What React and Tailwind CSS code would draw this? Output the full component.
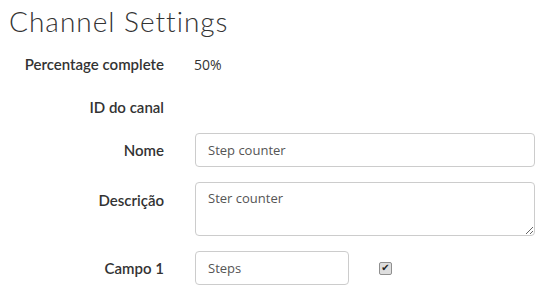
import React from 'react';

const labelCls = "w-[164px] shrink-0 text-right text-[15px] font-semibold text-[#333] font-['Lato',sans-serif]";
const inputCls = "h-[34px] rounded border border-[#ccc] bg-white px-3 text-[13px] text-[#555] outline-none";

const Row = ({ label, children, className = '' }) => (
  <div className={`flex items-center ${className}`}>
    <div className={labelCls}>{label}</div>
    <div className="ml-[31px] flex items-center">{children}</div>
  </div>
);

export default function App() {
  return (
    <div className="w-[542px] h-[295px] overflow-hidden bg-white font-['Open_Sans',sans-serif] text-[#333]">
      <h1 className="pl-[9px] pt-[2px] text-[28px] font-light leading-[38px] tracking-[1px] font-['Lato',sans-serif]">
        Channel Settings
      </h1>

      <Row label="Percentage complete" className="mt-[7px] h-[34px]">
        <span className="-ml-px text-[14px]">50%</span>
      </Row>

      <Row label="ID do canal" className="mt-[9px] h-[34px]" />

      <Row label="Nome" className="mt-[9px]">
        <input className={`${inputCls} w-[340px]`} defaultValue="Step counter" />
      </Row>

      <div className="mt-[15px] flex items-start">
        <div className={`${labelCls} pt-[7px]`}>Descrição</div>
        <textarea
          className="ml-[31px] h-[54px] w-[340px] rounded border border-[#ccc] bg-white px-3 py-[6px] text-[13px] text-[#555] outline-none"
          defaultValue="Ster counter"
        />
      </div>

      <Row label="Campo 1" className="mt-[15px]">
        <input className={`${inputCls} w-[154px]`} defaultValue="Steps" />
        <span
          role="checkbox"
          aria-checked="true"
          className="ml-[30px] flex h-[13px] w-[13px] items-center justify-center rounded-[2px] border border-[#8f8f8f] bg-[#dedede] text-[10px] leading-none text-[#222] font-['DejaVu_Sans',sans-serif]"
        >
          ✔
        </span>
      </Row>
    </div>
  );
}
